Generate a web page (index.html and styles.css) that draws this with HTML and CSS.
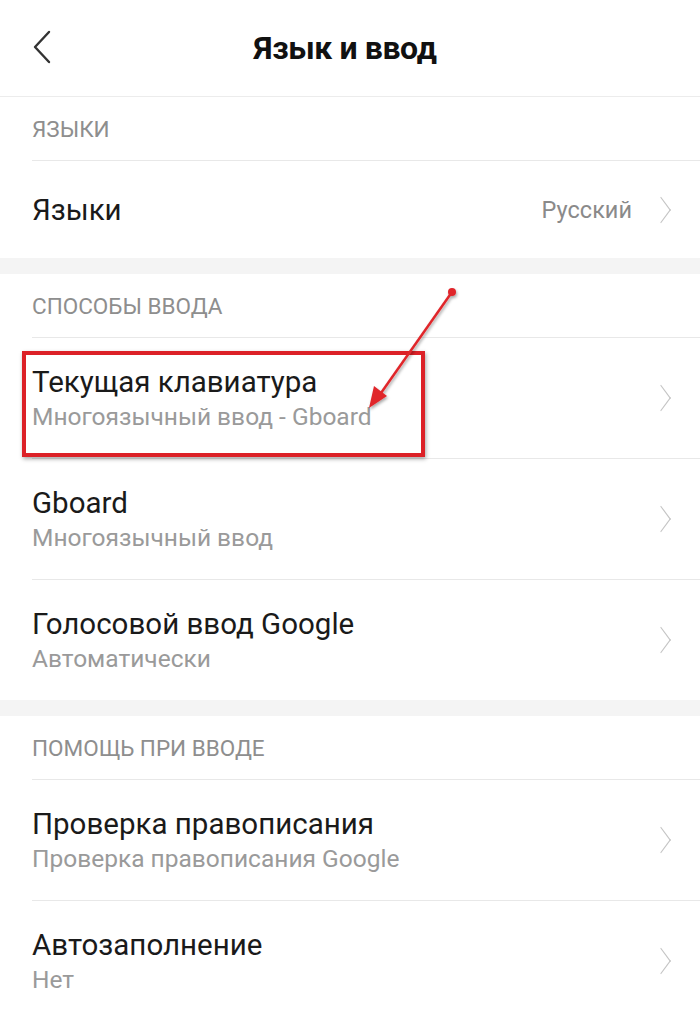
FILE: index.html
```html
<!DOCTYPE html>
<html lang="ru">
<head>
    <meta charset="UTF-8">
    <meta name="viewport" content="width=device-width, initial-scale=1.0">
    <title>Язык и ввод</title>
    <link rel="stylesheet" href="styles.css">
</head>
<body>
    <div class="screen">
        <!-- Top bar -->
        <header class="topbar">
            <svg class="back" width="20" height="34" viewBox="0 0 20 34">
                <path d="M17 2 L3 17 L17 32" fill="none" stroke="#333" stroke-width="2.4" stroke-linecap="round" stroke-linejoin="round"/>
            </svg>
            <h1>Язык и ввод</h1>
        </header>

        <!-- Languages -->
        <section class="group">
            <div class="group-title">ЯЗЫКИ</div>
            <div class="row row-single">
                <div class="row-text"><div class="title">Языки</div></div>
                <span class="value">Русский</span>
                <span class="chev"></span>
            </div>
        </section>

        <!-- Input methods -->
        <section class="group">
            <div class="group-title">СПОСОБЫ ВВОДА</div>
            <div class="row highlighted">
                <div class="row-text">
                    <div class="title">Текущая клавиатура</div>
                    <div class="sub">Многоязычный ввод - Gboard</div>
                </div>
                <span class="chev"></span>
                <div class="mark"></div>
            </div>
            <div class="row">
                <div class="row-text">
                    <div class="title">Gboard</div>
                    <div class="sub">Многоязычный ввод</div>
                </div>
                <span class="chev"></span>
            </div>
            <div class="row">
                <div class="row-text">
                    <div class="title">Голосовой ввод Google</div>
                    <div class="sub">Автоматически</div>
                </div>
                <span class="chev"></span>
            </div>
        </section>

        <!-- Input assistance -->
        <section class="group">
            <div class="group-title">ПОМОЩЬ ПРИ ВВОДЕ</div>
            <div class="row">
                <div class="row-text">
                    <div class="title">Проверка правописания</div>
                    <div class="sub">Проверка правописания Google</div>
                </div>
                <span class="chev"></span>
            </div>
            <div class="row">
                <div class="row-text">
                    <div class="title">Автозаполнение</div>
                    <div class="sub">Нет</div>
                </div>
                <span class="chev"></span>
            </div>
        </section>

        <!-- annotation arrow drawn over the list -->
        <svg class="arrow" width="700" height="1021" viewBox="0 0 700 1021">
            <defs>
                <filter id="sh" x="-20%" y="-20%" width="140%" height="140%">
                    <feDropShadow dx="1" dy="2" stdDeviation="1.5" flood-color="#000" flood-opacity="0.35"/>
                </filter>
            </defs>
            <g filter="url(#sh)">
                <line x1="452" y1="292" x2="381" y2="393" stroke="#e0262b" stroke-width="2.5"/>
                <polygon points="369,408 374,386 387,396" fill="#e0262b"/>
                <circle cx="452" cy="292" r="4" fill="#e0262b"/>
            </g>
        </svg>
    </div>
</body>
</html>
```

FILE: styles.css
```css
/* General styling */
body {
    margin: 0;
    padding: 0;
    background: #f4f4f4;
    font-family: Roboto, "Noto Sans", sans-serif;
    color: #1a1a1a;
}
.screen {
    position: relative;
    width: 700px;
    height: 1021px;
    overflow: hidden;
    background: #f4f4f4;
}
/* Top bar */
.topbar {
    height: 96px;
    background: #fff;
    border-bottom: 1px solid #ececec;
    display: flex;
    align-items: center;
    justify-content: center;
    position: relative;
}
.topbar .back {
    position: absolute;
    left: 32px;
    top: 30px;
}
.topbar h1 {
    margin: 0 0 0 -10px;
    font-size: 32px;
    font-weight: 700;
    color: #111;
    letter-spacing: -0.4px;
}
/* Groups */
.group {
    background: #fff;
    padding-left: 32px;
    margin-bottom: 16px;
}
.group-title {
    height: 63px;
    display: flex;
    align-items: center;
    font-size: 22.5px;
    color: #8e8e8e;
    border-bottom: 1px solid #e8e8e8;
}
.row {
    height: 120px;
    display: flex;
    align-items: center;
    padding-right: 28px;
    border-bottom: 1px solid #e8e8e8;
    position: relative;
}
.row:last-child {
    border-bottom: none;
}
.row-single {
    height: 97px;
}
.row-text {
    flex: 1;
}
.title {
    font-size: 29.5px;
    color: #1a1a1a;
    line-height: 36px;
}
.sub {
    font-size: 24.5px;
    color: #9a9a9a;
    line-height: 32px;
    margin-top: 1px;
}
.value {
    font-size: 23.5px;
    color: #8a8a8a;
    margin-right: 22px;
}
.chev {
    width: 13px;
    height: 13px;
    border-top: 1.6px solid #c4c4c4;
    border-right: 1.6px solid #c4c4c4;
    transform: scaleY(1.35) rotate(45deg);
    margin-right: 4px;
}
/* Red highlight box */
.mark {
    position: absolute;
    left: -10px;
    top: 13px;
    width: 395px;
    height: 98px;
    border: 4px solid #dc2127;
    box-shadow: 1px 2px 4px rgba(0, 0, 0, 0.35);
}
.arrow {
    position: absolute;
    left: 0;
    top: 0;
    pointer-events: none;
}
```
